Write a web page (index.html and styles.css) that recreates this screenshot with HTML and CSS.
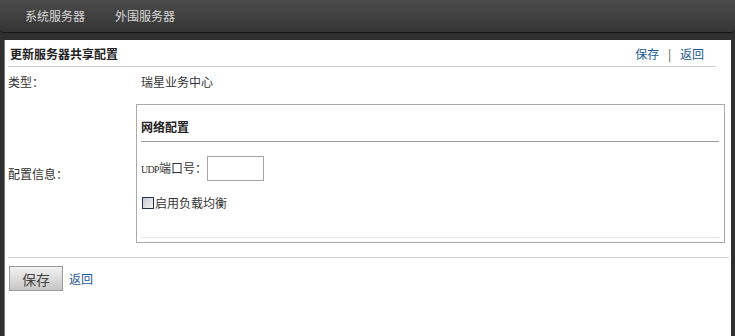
FILE: index.html
```html
<!DOCTYPE html>
<html lang="zh-CN">
<head>
  <meta charset="UTF-8" />
  <title>更新服务器共享配置</title>
  <link rel="stylesheet" href="styles.css">
</head>
<body>

  <div class="topbar">
    <a class="nav-item" href="#">系统服务器</a>
    <a class="nav-item" href="#">外围服务器</a>
  </div>

  <div class="main">
    <div class="page-head">
      <span class="page-title">更新服务器共享配置</span>
      <span class="head-links">
        <a href="#">保存</a>
        <span class="sep">|</span>
        <a href="#">返回</a>
      </span>
    </div>

    <div class="form">
      <div class="row">
        <div class="label">类型：</div>
        <div class="value">瑞星业务中心</div>
      </div>
      <div class="row row-box">
        <div class="label">配置信息：</div>
        <div class="box">
          <div class="box-title">网络配置</div>
          <div class="field">
            <span><span class="latin">UDP</span>端口号：</span>
            <input type="text" class="text-input" />
          </div>
          <label class="check">
            <input type="checkbox" class="check-box" />启用负载均衡
          </label>
          <div class="box-foot"></div>
        </div>
      </div>
    </div>

    <div class="actions">
      <button class="btn">保存</button>
      <a href="#">返回</a>
    </div>
  </div>

</body>
</html>
```

FILE: styles.css
```css
html, body {
  margin: 0;
  padding: 0;
  height: 100%;
  overflow: hidden;
}

body {
  background-color: #2f2f2f;
  font-family: "Noto Sans CJK SC", "Liberation Sans", sans-serif;
  font-size: 12px;
  color: #333;
}

a {
  color: #1d5a94;
  text-decoration: none;
}

/* top navigation */
.topbar {
  height: 32px;
  background: linear-gradient(#4c4c4c, #353535);
  border-bottom: 1px solid #151515;
  border-radius: 0 0 4px 4px;
  display: flex;
  align-items: center;
  gap: 30px;
  padding-left: 25px;
  margin-bottom: 7px;
}

.nav-item {
  color: #d8d8d8;
  line-height: 16px;
}

/* white page */
.main {
  background-color: #fff;
  margin: 0 4px 0 4px;
  padding-left: 3px;
  height: 296px;
  border-left: 1px solid #777;
}

.page-head {
  display: flex;
  justify-content: space-between;
  align-items: center;
  line-height: 16px;
  padding: 6px 12px 4px 2px;
  margin-right: 15px;
  border-bottom: 1px solid #cfcfcf;
}

.page-title {
  font-weight: bold;
  color: #222;
}

.head-links .sep {
  color: #555;
  margin: 0 6px;
}

/* form */
.form {
  margin-right: 2px;
  border-bottom: 1px solid #cfcfcf;
}

.row {
  display: grid;
  grid-template-columns: 128px 1fr;
  align-items: center;
  line-height: 16px;
  padding: 7px 0;
}

.row-box {
  padding: 7px 0 14px;
}

.label {
  color: #333;
}

.value {
  padding-left: 5px;
}

.box {
  border: 1px solid #a9a9a9;
  padding: 0 5px 4px 4px;
  margin-right: 4px;
}

.box-title {
  font-weight: bold;
  color: #222;
  padding: 14px 0 6px;
  border-bottom: 1px solid #9a9a9a;
}

.field {
  display: flex;
  align-items: center;
  margin-top: 14px;
}

.latin {
  font-family: "Liberation Serif", serif;
  font-size: 10px;
  letter-spacing: -0.7px;
}

.text-input {
  box-sizing: border-box;
  width: 57px;
  height: 25px;
  margin: 0;
  border: 1px solid #a5a5a5;
  padding: 2px;
  font-family: inherit;
}

.check {
  display: flex;
  align-items: center;
  margin-top: 14px;
  margin-left: 1px;
}

.check-box {
  appearance: none;
  box-sizing: border-box;
  width: 12px;
  height: 12px;
  margin: 0 1px 0 0;
  border: 1px solid #1f3550;
  background: linear-gradient(135deg, #c4c8cd, #f4f4f4);
}

.box-foot {
  margin-top: 26px;
  border-bottom: 1px solid #e6e6e6;
}

/* bottom buttons */
.actions {
  display: flex;
  align-items: center;
  gap: 6px;
  padding: 8px 0 0 1px;
}

.btn {
  box-sizing: border-box;
  width: 54px;
  height: 25px;
  padding: 0;
  font-family: inherit;
  font-size: 14px;
  color: #444;
  border: 1px solid #9a9a9a;
  background: linear-gradient(#f2f2f2, #c6c6c6);
}
```
